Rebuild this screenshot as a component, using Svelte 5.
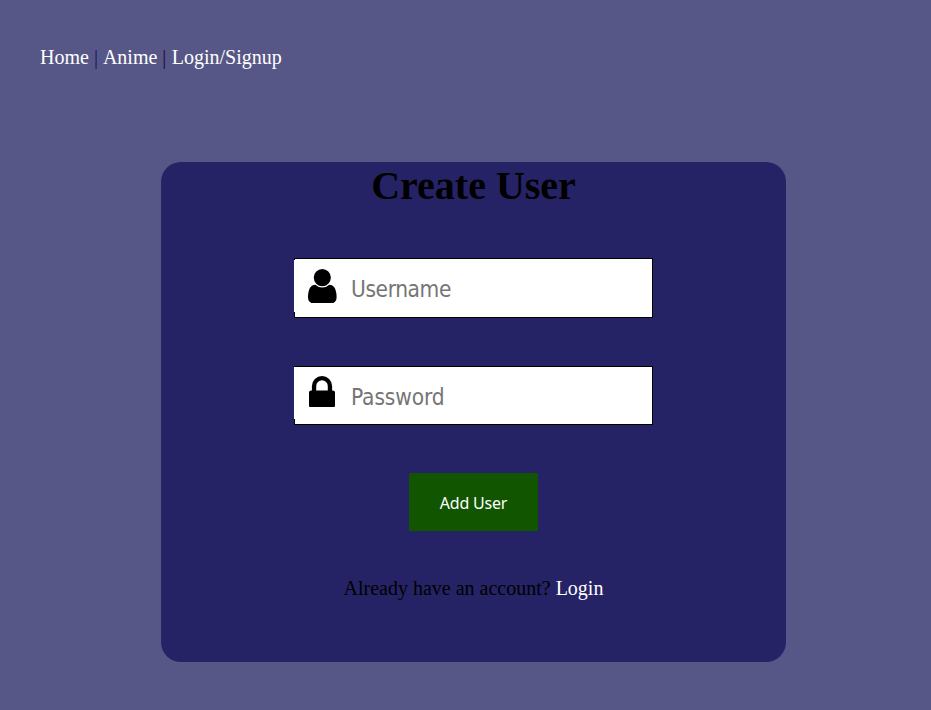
<script>
  let username = $state('');
  let password = $state('');
</script>

<div class="page">
  <nav><a href="#home">Home</a><span class="bar one">|</span><a href="#anime">Anime</a><span class="bar two">|</span><a href="#login">Login/Signup</a></nav>

  <main>
    <h1>Create User</h1>
    <form onsubmit={(e) => e.preventDefault()}>
      <div class="field user">
        <span class="icon">
          <svg width="28.6" height="34.3" viewBox="0 128 1280 1536"><path d="M1280 1399q0 109-62.5 187t-150.5 78h-854q-88 0-150.5-78t-62.5-187q0-85 8.5-160.5t31.5-152 58.5-131 94-89 134.5-34.5q131 128 313 128t313-128q76 0 134.5 34.5t94 89 58.5 131 31.5 152 8.5 160.5zm-256-887q0 159-112.5 271.5t-271.5 112.5-271.5-112.5-112.5-271.5 112.5-271.5 271.5-112.5 271.5 112.5 112.5 271.5z" /></svg>
        </span>
        <input type="text" placeholder="Username" bind:value={username} />
      </div>
      <div class="field lock">
        <span class="icon">
          <svg width="26" height="31.8" viewBox="0 128 1152 1408"><path d="M320 768h512v-192q0-106-75-181t-181-75-181 75-75 181v192zm832 96v576q0 40-28 68t-68 28h-960q-40 0-68-28t-28-68v-576q0-40 28-68t68-28h32v-192q0-184 132-316t316-132 316 132 132 316v192h32q40 0 68 28t28 68z" /></svg>
        </span>
        <input type="password" placeholder="Password" bind:value={password} />
      </div>
      <button>Add User</button>
    </form>
    <p>Already have an account? <a href="#signin">Login</a></p>
  </main>
</div>

<style>
  :global(body) {
    background: #575787;
  }
  .page {
    box-sizing: border-box;
    height: 710px;
    padding: 46px 0 0 40px;
    font-family: "Liberation Serif", "Times New Roman", serif;
    font-size: 20px;
    line-height: 23px;
    overflow: hidden;
  }
  a {
    color: #fff;
    text-decoration: none;
  }
  nav {
    height: 23px;
    white-space: nowrap;
  }
  .bar {
    margin: 0 5px;
  }
  .one {
    color: #14146a;
  }
  .two {
    margin-right: 5.4px;
    color: #260538;
  }
  main {
    box-sizing: border-box;
    width: 625px;
    height: 500px;
    margin: 93px 0 0 121px;
    border-radius: 20px;
    background: #252365;
    display: flex;
    flex-direction: column;
    align-items: center;
  }
  h1 {
    margin: 0;
    height: 96px;
    font-size: 40px;
    line-height: 48px;
  }
  form {
    display: flex;
    flex-direction: column;
    align-items: center;
  }
  .field {
    position: relative;
    width: 359px;
    height: 60px;
    margin-bottom: 48px;
  }
  .field.lock {
    height: 59px;
  }
  .icon {
    position: absolute;
    left: 0;
    top: 2px;
    width: 50px;
    height: 52px;
    background: #fff;
  }
  .lock .icon {
    top: 1px;
  }
  svg {
    display: block;
    margin: 8.6px 0 0 14px;
  }
  .lock svg {
    margin: 8.6px 0 0 15.3px;
  }
  input {
    display: block;
    box-sizing: border-box;
    width: 100%;
    height: 100%;
    margin: 0;
    padding: 1px 10px 0 56px;
    border: 1px solid #000;
    border-radius: 0;
    outline: none;
    background: #fff;
    font: 22.5px "DejaVu Sans Condensed", "DejaVu Sans", sans-serif;
    font-stretch: condensed;
    letter-spacing: -0.4px;
  }
  .lock input {
    padding-top: 3px;
    letter-spacing: -0.1px;
  }
  input::placeholder {
    color: #757575;
    opacity: 1;
  }
  button {
    width: 129px;
    height: 58px;
    padding: 2px 0 0;
    border: 0;
    border-radius: 1px;
    background: #115500;
    color: #fff;
    font: 16px "Noto Sans", sans-serif;
    letter-spacing: -0.2px;
  }
  p {
    margin: 46px 0 0;
    white-space: nowrap;
  }
</style>
